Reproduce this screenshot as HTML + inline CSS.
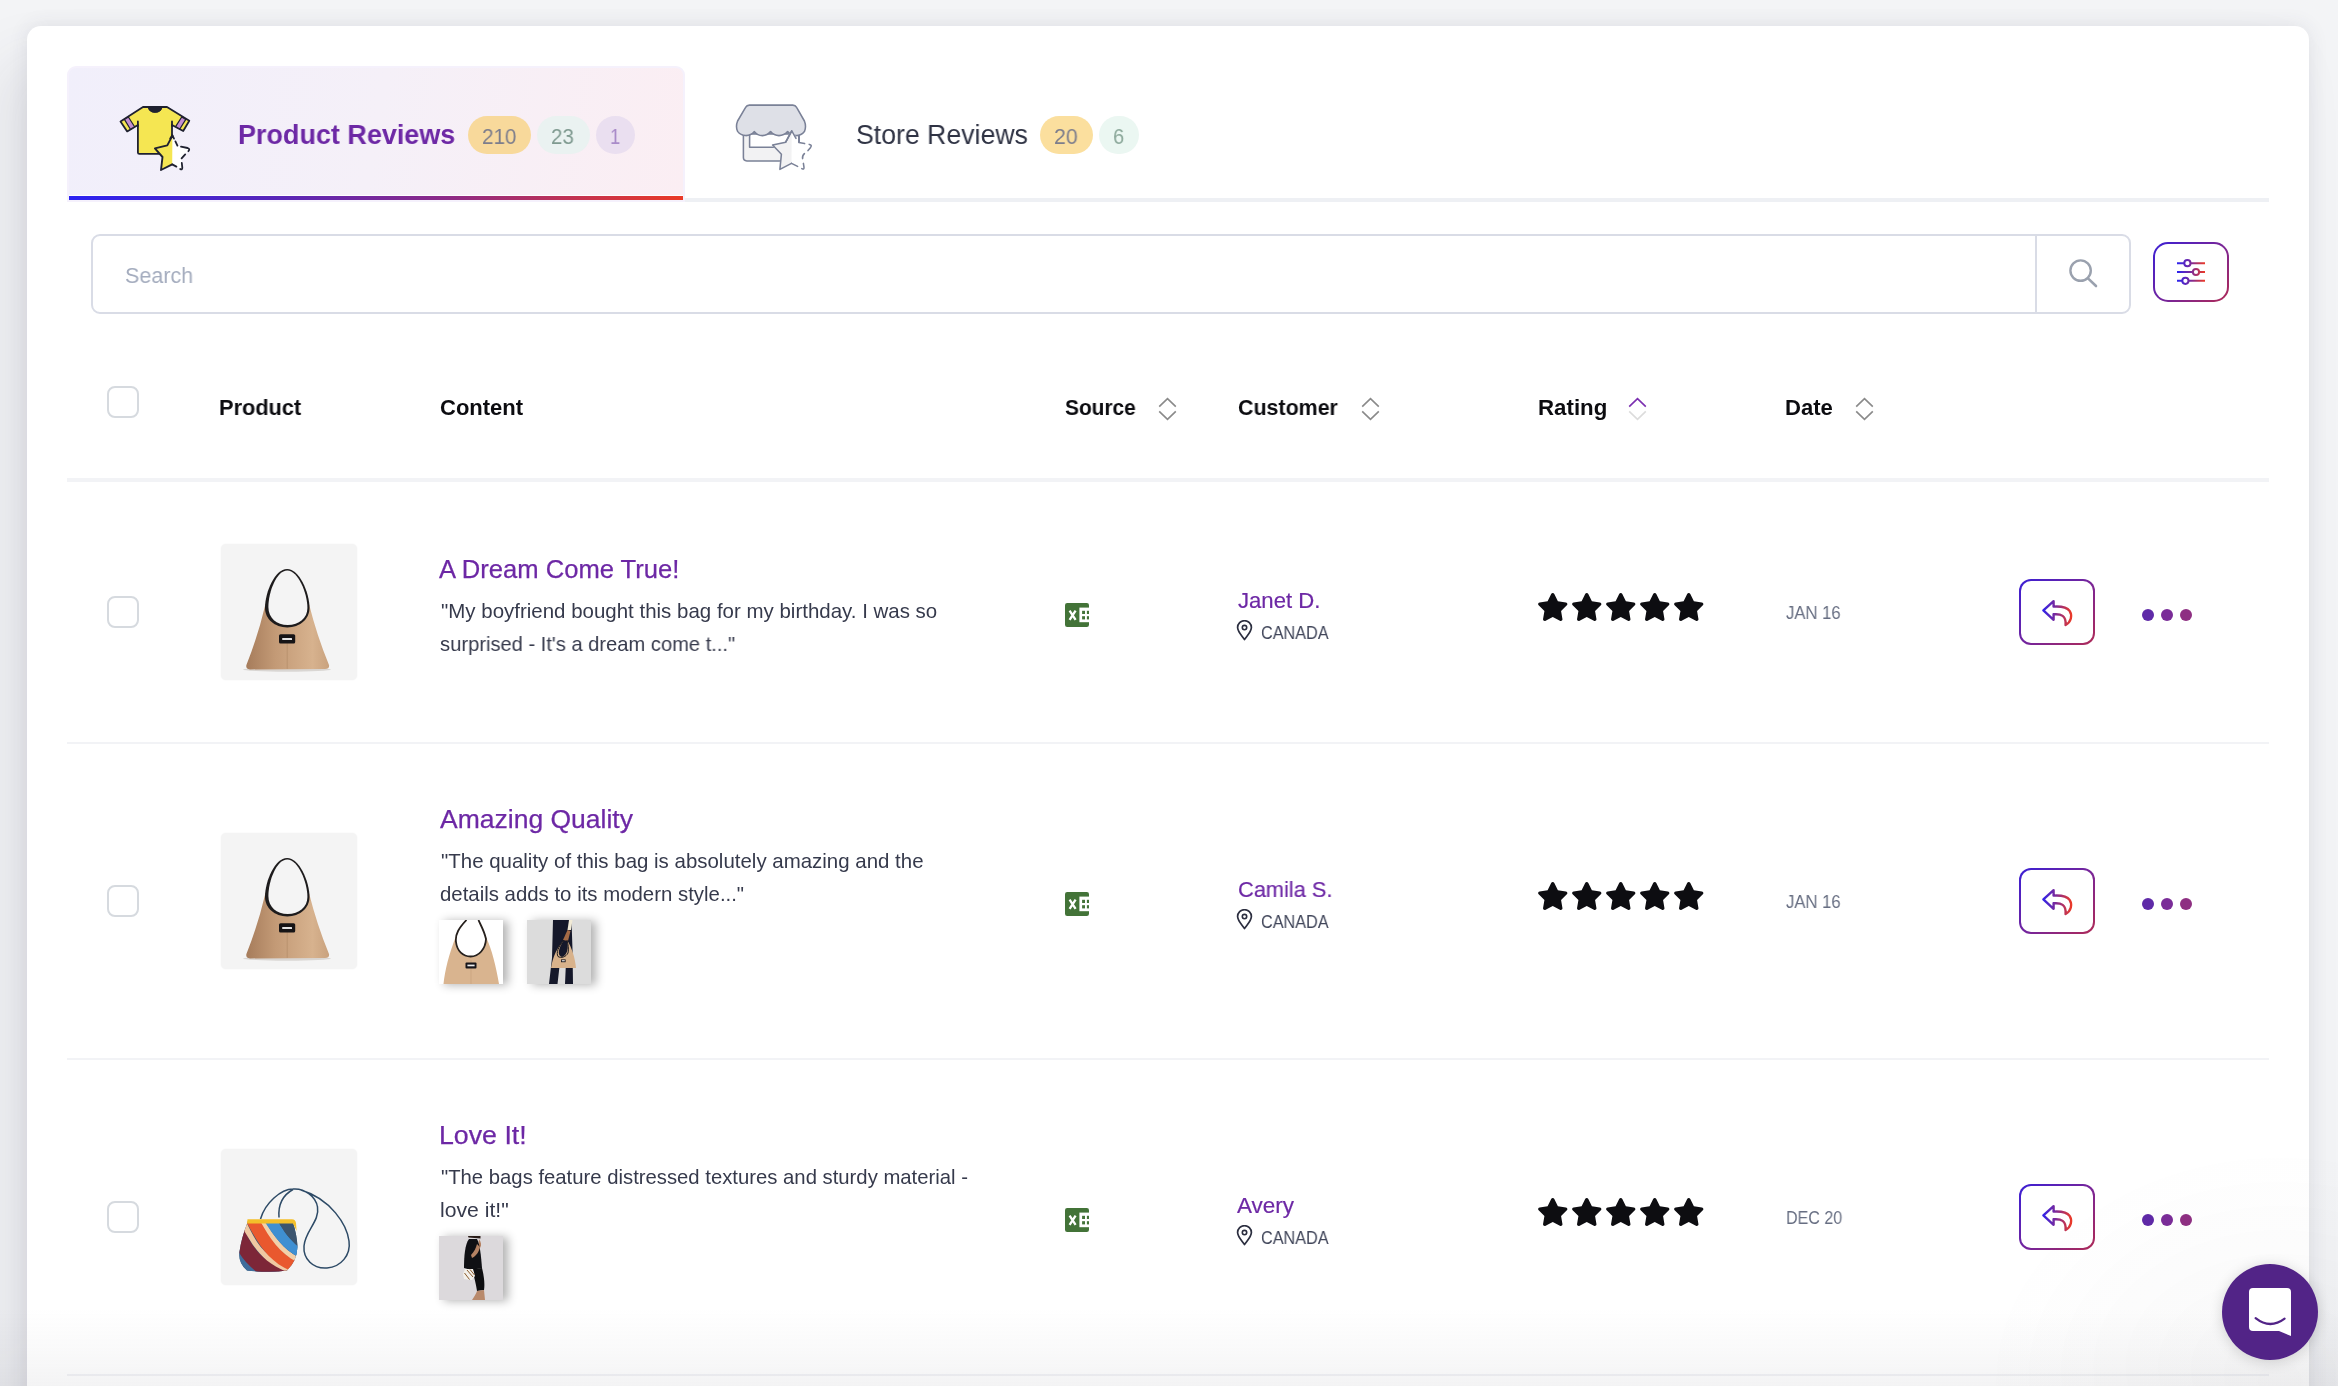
<!DOCTYPE html><html><head><meta charset="utf-8"><title>Reviews</title><style>
*{box-sizing:border-box;margin:0;padding:0}
html,body{width:2338px;height:1386px;overflow:hidden}
body{background:#f3f4f6;font-family:"Liberation Sans",sans-serif;position:relative}
.abs{position:absolute;display:block}
.card{position:absolute;left:27px;top:26px;width:2282px;height:1500px;background:#fff;border-radius:14px;box-shadow:0 0 20px rgba(60,60,90,.10),-25px 35px 60px rgba(60,60,90,.10)}
.t{position:absolute;white-space:nowrap;line-height:1;transform-origin:0 50%;will-change:transform}
.grayline{position:absolute;left:67px;top:198px;width:2202px;height:4px;background:#eef0f4}
.tab{position:absolute;left:67px;top:66px;width:618px;height:136px;border-radius:9px 9px 0 0;background:#f5f1fc;overflow:hidden}
.tabin{position:absolute;left:2px;top:2px;right:2px;height:127px;border-radius:7px 7px 0 0;background:linear-gradient(100deg,#f1effb 0%,#f5f0f8 50%,#fbeef3 100%)}
.uline{position:absolute;left:2px;right:2px;top:130px;height:4px;background:linear-gradient(90deg,#2b22f2 0%,#5a26b6 35%,#8e2a86 62%,#c9334a 85%,#ea3a26 100%)}
.tab:after{content:"";position:absolute;left:2px;right:2px;top:129px;height:1px;background:#fff}
.badge{position:absolute;height:38px;border-radius:19px}
.search{position:absolute;left:91px;top:234px;width:2040px;height:80px;border:2px solid #d9dce6;border-radius:9px;background:#fff}
.sdiv{position:absolute;left:1942px;top:0;width:2px;height:76px;background:#d9dce6}
.fbtn{position:absolute;left:2153px;top:242px;width:76px;height:60px;border-radius:15px;border:2px solid transparent;background:linear-gradient(#fff,#fff) padding-box,linear-gradient(135deg,#3a1fd6 0%,#7a2596 55%,#b02a55 100%) border-box}
.rbtn{position:absolute;left:2019px;width:76px;height:66px;border-radius:12px;border:2px solid transparent;background:linear-gradient(#fff,#fff) padding-box,linear-gradient(135deg,#3a1fd6 0%,#7a2596 55%,#b02a55 100%) border-box}
.rbtn svg,.fbtn svg{display:block}
.cb{position:absolute;left:107px;width:32px;height:32px;border:2px solid #d6dadf;border-radius:8px;background:#fff}
.hr{position:absolute;left:67px;width:2202px;height:2px;background:#f2f3f6}
.pimg{position:absolute;left:221px;width:136px;height:136px;border-radius:5px;background:#f4f4f4;overflow:hidden;box-shadow:0 0 2px rgba(0,0,0,.06)}
.pimg svg,.thumb svg{display:block}
.thumb{position:absolute;width:64px;height:64px;box-shadow:5px 1px 9px rgba(0,0,0,.3)}
.fade{position:absolute;left:0;top:1086px;width:2338px;height:300px;background:radial-gradient(ellipse 300px 240px at 2280px 100%,rgba(60,60,70,.04),rgba(60,60,70,0) 100%),linear-gradient(rgba(120,120,130,0) 74%,rgba(120,120,130,.04) 88%,rgba(120,120,130,.085))}
.chat{position:absolute;left:2222px;top:1264px;width:96px;height:96px;border-radius:50%;background:#522487;box-shadow:0 2px 14px rgba(0,0,0,.16)}
</style></head><body>
<div class="card"></div>
<div class="grayline"></div>
<div class="tab"><div class="tabin"></div><div class="uline"></div></div>
<svg class="abs" style="left:115px;top:100px" width="84" height="76" viewBox="115 100 84 76">
<g stroke="#1f2130" stroke-width="1.8" stroke-linejoin="round" stroke-linecap="round">
<path d="M143 107 L167 107 L189.3 120.8 L183.2 131 L172 125 L172 152.4 Q172 153.9 170.5 153.9 L139.4 153.9 Q137.9 153.9 137.9 152.4 L137.9 125 L127.2 131.4 L120.5 121.4 Z" fill="#f5e652"/>
<path d="M124.4 119.4 L128.4 117 L134.6 126.8 L130.4 129.3 Z" fill="#c48fd1" stroke-width="1.2"/>
<path d="M181.7 117 L185.8 119.4 L179.8 129 L175.6 126.6 Z" fill="#c48fd1" stroke-width="1.2"/>
<path d="M148.2 107.4 A7 6 0 0 0 162 107.4 Z" fill="#1f2130" stroke-width="1"/>
</g>
<path d="M172.3 135.6 L177.4 145.9 L189.6 149 L181.4 158.2 L182.3 170 L172 164.4 L161 170 L162.5 157 L154.9 148.4 L167.3 145.4 Z" fill="#fff"/>
<path d="M172.4 135.6 L172.2 164.4 L161 170 L162.5 157 L154.9 148.4 L167.3 145.4 Z" fill="#f5e652"/>
<path d="M172.4 135.6 L167.3 145.4 L154.9 148.4 L162.5 157 L161 170 L172.2 164.4" fill="none" stroke="#1f2130" stroke-width="1.9" stroke-linejoin="round" stroke-linecap="round"/>
<path d="M137.9 121.4 V126 M172 121.4 V126" stroke="#1f2130" stroke-width="1.8" stroke-linecap="round"/>
<path d="M170.2 138.4 L172.3 135.2 L174 138.6 M175.4 141.4 L177.4 145.6 M181 146.6 L187.6 148 Q190.4 149 188.4 151.2 M185.2 154.4 L181.6 158.4 M181.8 163 L182.3 167.6 Q182.4 170.4 180.2 169 M176.4 166.6 L172.2 164.4" fill="none" stroke="#1f2130" stroke-width="1.8" stroke-linecap="round" stroke-linejoin="round"/>
</svg>
<span class="t" style="left:237.82px;top:120.92px;font-size:27.5px;font-weight:700;color:#6d28a5;transform:scaleX(0.9805)">Product Reviews</span>
<div class="badge" style="left:468px;top:116px;width:63px;background:#f8d99b"></div>
<span class="t" style="left:481.86px;top:125.96px;font-size:21.9px;color:#7c7d8c;transform:scaleX(0.9449)">210</span>
<div class="badge" style="left:537px;top:116px;width:53px;background:#eaf2f1"></div>
<span class="t" style="left:551.36px;top:125.96px;font-size:21.9px;color:#7f9a90;transform:scaleX(0.9364)">23</span>
<div class="badge" style="left:596px;top:116px;width:38.6px;background:#eadff0"></div>
<span class="t" style="left:609.85px;top:125.96px;font-size:21.9px;color:#a98bc9;transform:scaleX(0.8455)">1</span>
<svg class="abs" style="left:730px;top:98px" width="90" height="80" viewBox="730 98 90 80">
<g stroke="#7a8197" stroke-width="1.55" stroke-linejoin="round" stroke-linecap="round">
<path d="M743.4 133 L743.4 157.6 Q743.4 160.9 746.8 160.9 L799 160.9 L799 133 Z" fill="#f2f2f3"/>
<path d="M749.6 134 L749.6 147.3 L799 147.3 L799 134 Z" fill="#fff"/>
<path d="M749.4 105.1 L792.8 105.1 Q795.4 105.1 796.6 107.4 L804.4 121 Q806.6 126.6 804.4 131.6 Q801 135.8 796.2 135.6 Q791 135.4 787.6 131.6 Q784 135.6 779 135.6 Q774 135.6 770.6 131.6 Q767.4 135.6 762.4 135.6 Q757.4 135.6 754.4 131.6 Q751 135.6 745.8 135.6 Q740.6 135.4 737.6 131.4 Q735.4 126.6 737.6 121 L745.6 107.4 Q746.8 105.1 749.4 105.1Z" fill="#dee0e7"/>
</g>
<path d="M791.8 130.9 L798.6 142.8 L811.4 145 L802.6 155.7 L804.1 169.4 L791.5 163.4 L779.9 169.4 L781.4 154.2 L772.6 145 L785.7 142.2 Z" fill="#fff" stroke="#fff" stroke-width="1.5" stroke-linejoin="round"/>
<path d="M791.7 130.9 L791.5 163.4 L779.9 169.4 L781.4 154.2 L772.6 145 L785.7 142.2 Z" fill="#f2f2f3"/>
<path d="M791.7 130.9 L785.7 142.2 L772.6 145 L781.4 154.2 L779.9 169.4 L791.5 163.4" fill="none" stroke="#7a8197" stroke-width="1.55" stroke-linejoin="round" stroke-linecap="round"/>
<path d="M785.7 142.2 L791.8 130.9 L796 138.4 M798.8 135.6 L798.8 142.6 L804.6 143.6 M809.2 144.4 Q812.4 145 810.6 147.4 L808 150.6 M804.4 153.6 Q802 155.8 802.6 158.6 M803.4 163.4 L804 167.4 Q804.2 170 801.8 168.6 M797.6 166.4 L791.5 163.4" fill="none" stroke="#7a8197" stroke-width="1.55" stroke-linecap="round" stroke-linejoin="round"/>
</svg>
<span class="t" style="left:855.83px;top:120.92px;font-size:27.5px;color:#2f3344;transform:scaleX(0.9696)">Store Reviews</span>
<div class="badge" style="left:1040px;top:116px;width:53px;background:#fbdf9e"></div>
<span class="t" style="left:1054.03px;top:125.96px;font-size:21.9px;color:#7c7d8c;transform:scaleX(0.9709)">20</span>
<div class="badge" style="left:1099px;top:116px;width:40px;background:#ebf7f2"></div>
<span class="t" style="left:1112.88px;top:125.96px;font-size:21.9px;color:#8ca99b;transform:scaleX(0.9182)">6</span>
<div class="search"><div class="sdiv"></div></div>
<span class="t" style="left:125.12px;top:265.08px;font-size:22px;color:#a4acbe;transform:scaleX(0.9767)">Search</span>
<svg class="abs" style="left:2066px;top:256px" width="36" height="36" viewBox="2066 256 36 36"><circle cx="2080.6" cy="270.6" r="10.2" fill="none" stroke="#9aa1ae" stroke-width="2.4"/><path d="M2088 278.4 L2096 286" stroke="#9aa1ae" stroke-width="2.6" stroke-linecap="round"/></svg>
<div class="fbtn"><svg width="72" height="56" viewBox="2155 244 72 56">
<defs><linearGradient id="fg" gradientUnits="userSpaceOnUse" x1="2177" y1="0" x2="2205" y2="0"><stop offset="0" stop-color="#2a22f0"/><stop offset=".5" stop-color="#7b2a9a"/><stop offset="1" stop-color="#ee3a24"/></linearGradient></defs>
<g stroke="url(#fg)" stroke-width="2" fill="#fff">
<path d="M2177 263.2 H2205 M2177 272 H2205 M2177 280.8 H2205"/>
<circle cx="2187.4" cy="263.2" r="3.1"/><circle cx="2196" cy="272" r="3.1"/><circle cx="2185.4" cy="280.8" r="3.1"/></g></svg></div>
<div class="cb" style="top:386px"></div>
<span class="t" style="left:219.41px;top:397.08px;font-size:22px;font-weight:700;color:#0c0c10;transform:scaleX(0.9893)">Product</span>
<span class="t" style="left:439.70px;top:397.08px;font-size:22px;font-weight:700;color:#0c0c10;transform:scaleX(0.9992)">Content</span>
<span class="t" style="left:1065.40px;top:397.08px;font-size:22px;font-weight:700;color:#0c0c10;transform:scaleX(0.9496)">Source</span>
<span class="t" style="left:1238.20px;top:397.08px;font-size:22px;font-weight:700;color:#0c0c10;transform:scaleX(0.9726)">Customer</span>
<span class="t" style="left:1537.59px;top:397.08px;font-size:22px;font-weight:700;color:#0c0c10;transform:scaleX(1.0121)">Rating</span>
<span class="t" style="left:1785.40px;top:397.08px;font-size:22px;font-weight:700;color:#0c0c10;transform:scaleX(1.0032)">Date</span>
<svg class="abs" style="left:1158px;top:396px" width="19" height="26" viewBox="0 0 19 26"><path d="M1.2 10.6 L9.5 2.6 L17.8 10.6" fill="none" stroke="#8a8a8a" stroke-width="1.6"/><path d="M1.2 15.4 L9.5 23.4 L17.8 15.4" fill="none" stroke="#8a8a8a" stroke-width="1.6"/></svg>
<svg class="abs" style="left:1361px;top:396px" width="19" height="26" viewBox="0 0 19 26"><path d="M1.2 10.6 L9.5 2.6 L17.8 10.6" fill="none" stroke="#8a8a8a" stroke-width="1.6"/><path d="M1.2 15.4 L9.5 23.4 L17.8 15.4" fill="none" stroke="#8a8a8a" stroke-width="1.6"/></svg>
<svg class="abs" style="left:1628px;top:396px" width="19" height="26" viewBox="0 0 19 26"><path d="M1.2 10.6 L9.5 2.6 L17.8 10.6" fill="none" stroke="#7b2fb0" stroke-width="1.6"/><path d="M1.2 15.4 L9.5 23.4 L17.8 15.4" fill="none" stroke="#dcdcdc" stroke-width="1.6"/></svg>
<svg class="abs" style="left:1855px;top:396px" width="19" height="26" viewBox="0 0 19 26"><path d="M1.2 10.6 L9.5 2.6 L17.8 10.6" fill="none" stroke="#8a8a8a" stroke-width="1.6"/><path d="M1.2 15.4 L9.5 23.4 L17.8 15.4" fill="none" stroke="#8a8a8a" stroke-width="1.6"/></svg>
<div class="hr" style="top:478px;height:4px"></div>
<div class="hr" style="top:742px"></div>
<div class="hr" style="top:1058px"></div>
<div class="hr" style="top:1374px"></div>
<div class="cb" style="top:596px"></div>
<div class="pimg" style="top:544px"><svg width="136" height="136" viewBox="0 0 136 136">
<defs><linearGradient id="bg1" x1="0" y1="0" x2="1" y2="0"><stop offset="0" stop-color="#a67c5b"/><stop offset=".35" stop-color="#c39a76"/><stop offset=".8" stop-color="#d7b28e"/><stop offset="1" stop-color="#c9a27e"/></linearGradient>
<clipPath id="bc1"><path d="M0 0H136V136H0Z M66.3 26.7 A19.6 27.4 0 0 0 66.3 81.5 A19.6 27.4 0 0 0 66.3 26.7Z" clip-rule="evenodd"/></clipPath></defs>
<ellipse cx="66" cy="125.5" rx="44" ry="2.2" fill="#d9d6d3"/>
<path d="M44.5 60 L88 60 Q96 92 108 121 Q108.8 125 104 125 L29 125.4 Q24.5 125 25.4 121 Q37 92 44.5 60Z" fill="url(#bg1)"/>
<path d="M66.1 25 C78 25 88.5 48 88.5 64 C88.5 75 79 83.4 66.3 83.4 C53.6 83.4 44 75 44 64 C44 48 54 25 66.1 25Z" fill="#1d1b1c"/>
<path d="M66.3 26.5 C77 26.5 86.4 49 86.4 64 C86.4 74 78 81 66.7 81 C55.6 81 47.4 74 47.4 63 C47.4 48 55.5 26.5 66.3 26.5Z" fill="#f4f4f4"/>
<path d="M66.2 92 L66.2 124.8" stroke="#b38c69" stroke-width="0.7"/>
<rect x="58" y="90.2" width="16.2" height="9.4" rx="1.6" fill="#161416"/>
<rect x="61.2" y="93.9" width="9.8" height="2" rx=".5" fill="#e4e4e4"/>
</svg></div>
<span class="t" style="left:439.00px;top:556.90px;font-size:25.4px;color:#6d28a5;transform:scaleX(1.0081);-webkit-text-stroke:.25px #6d28a5">A Dream Come True!</span>
<span class="t" style="left:440.60px;top:600.96px;font-size:20.25px;color:#363a4c;transform:scaleX(1.0111)">"My boyfriend bought this bag for my birthday. I was so</span>
<span class="t" style="left:439.70px;top:634.06px;font-size:20.25px;color:#363a4c;transform:scaleX(0.9942)">surprised - It's a dream come t..."</span>
<svg class="abs" style="left:1065px;top:603px" width="24" height="24" viewBox="0 0 24 24"><rect x="0" y="0" width="24" height="24" rx="2.2" fill="#437338"/><rect x="14.4" y="4.6" width="10" height="14.6" fill="#fff"/><rect x="17.1" y="7.8" width="2.9" height="3.2" fill="#437338"/><rect x="21.9" y="7.8" width="2.1" height="3.2" fill="#437338"/><rect x="17.1" y="13.2" width="2.9" height="3.2" fill="#437338"/><rect x="21.9" y="13.2" width="2.1" height="3.2" fill="#437338"/><path d="M4.6 7.6 L10.6 16.8 M10.6 7.6 L4.6 16.8" stroke="#fff" stroke-width="2.3" fill="none"/></svg>
<span class="t" style="left:1238.30px;top:589.98px;font-size:22px;color:#6d28a5;transform:scaleX(1.0047);-webkit-text-stroke:.2px #6d28a5">Janet D.</span>
<svg class="abs" style="left:1236px;top:620px" width="17" height="21" viewBox="0 0 17 21"><path d="M8.5 19.6 C5.2 15 1.6 11.6 1.6 7.6 A6.9 6.9 0 0 1 15.4 7.6 C15.4 11.6 11.8 15 8.5 19.6 Z" fill="none" stroke="#2b2e3f" stroke-width="1.7" stroke-linejoin="round"/><circle cx="8.5" cy="7.6" r="2.2" fill="none" stroke="#2b2e3f" stroke-width="1.6"/></svg>
<span class="t" style="left:1261.40px;top:624.95px;font-size:17.9px;color:#41465a;transform:scaleX(0.9059)">CANADA</span>
<svg class="abs" style="left:1536.75px;top:593px" width="31.5" height="28" viewBox="0 0 576 512"><path fill="#0d0d11" d="M259.3 17.8L194 150.2 47.9 171.5c-26.2 3.8-36.7 36.1-17.7 54.6l105.7 103-25 145.5c-4.5 26.3 23.2 46 46.4 33.7L288 439.6l130.7 68.7c23.2 12.2 50.9-7.4 46.4-33.7l-25-145.5 105.7-103c19-18.5 8.5-50.8-17.7-54.6L382 150.2 316.7 17.8c-11.7-23.6-45.6-23.9-57.4 0z"/></svg>
<svg class="abs" style="left:1570.75px;top:593px" width="31.5" height="28" viewBox="0 0 576 512"><path fill="#0d0d11" d="M259.3 17.8L194 150.2 47.9 171.5c-26.2 3.8-36.7 36.1-17.7 54.6l105.7 103-25 145.5c-4.5 26.3 23.2 46 46.4 33.7L288 439.6l130.7 68.7c23.2 12.2 50.9-7.4 46.4-33.7l-25-145.5 105.7-103c19-18.5 8.5-50.8-17.7-54.6L382 150.2 316.7 17.8c-11.7-23.6-45.6-23.9-57.4 0z"/></svg>
<svg class="abs" style="left:1604.75px;top:593px" width="31.5" height="28" viewBox="0 0 576 512"><path fill="#0d0d11" d="M259.3 17.8L194 150.2 47.9 171.5c-26.2 3.8-36.7 36.1-17.7 54.6l105.7 103-25 145.5c-4.5 26.3 23.2 46 46.4 33.7L288 439.6l130.7 68.7c23.2 12.2 50.9-7.4 46.4-33.7l-25-145.5 105.7-103c19-18.5 8.5-50.8-17.7-54.6L382 150.2 316.7 17.8c-11.7-23.6-45.6-23.9-57.4 0z"/></svg>
<svg class="abs" style="left:1638.75px;top:593px" width="31.5" height="28" viewBox="0 0 576 512"><path fill="#0d0d11" d="M259.3 17.8L194 150.2 47.9 171.5c-26.2 3.8-36.7 36.1-17.7 54.6l105.7 103-25 145.5c-4.5 26.3 23.2 46 46.4 33.7L288 439.6l130.7 68.7c23.2 12.2 50.9-7.4 46.4-33.7l-25-145.5 105.7-103c19-18.5 8.5-50.8-17.7-54.6L382 150.2 316.7 17.8c-11.7-23.6-45.6-23.9-57.4 0z"/></svg>
<svg class="abs" style="left:1672.75px;top:593px" width="31.5" height="28" viewBox="0 0 576 512"><path fill="#0d0d11" d="M259.3 17.8L194 150.2 47.9 171.5c-26.2 3.8-36.7 36.1-17.7 54.6l105.7 103-25 145.5c-4.5 26.3 23.2 46 46.4 33.7L288 439.6l130.7 68.7c23.2 12.2 50.9-7.4 46.4-33.7l-25-145.5 105.7-103c19-18.5 8.5-50.8-17.7-54.6L382 150.2 316.7 17.8c-11.7-23.6-45.6-23.9-57.4 0z"/></svg>
<span class="t" style="left:1786.20px;top:603.96px;font-size:18px;color:#676e82;transform:scaleX(0.9252)">JAN 16</span>
<div class="rbtn" style="top:579px"><svg width="72" height="62" viewBox="2021 581 72 62"><defs><linearGradient id="rg" gradientUnits="userSpaceOnUse" x1="2042" y1="0" x2="2072" y2="0"><stop offset="0" stop-color="#2a22f0"/><stop offset=".45" stop-color="#7b2a9a"/><stop offset="1" stop-color="#ee3a24"/></linearGradient></defs><path d="M2053.6 601.2 L2043.4 610.4 L2053.6 619.8 L2053.6 614.3 C2061 613.6 2066.3 615.6 2065.6 625 C2071.2 621.8 2072.6 615.4 2069.6 610.9 C2066.6 606.6 2060.5 606.2 2053.6 606.6 Z" fill="none" stroke="url(#rg)" stroke-width="2.4" stroke-linejoin="round"/></svg></div>
<div class="abs" style="left:2142.2px;top:609px;width:12px;height:12px;border-radius:50%;background:#5f2aa8"></div><div class="abs" style="left:2161.1px;top:609px;width:12px;height:12px;border-radius:50%;background:#7a2c98"></div><div class="abs" style="left:2180.0px;top:609px;width:12px;height:12px;border-radius:50%;background:#8e2f82"></div>
<div class="cb" style="top:885px"></div>
<div class="pimg" style="top:833px"><svg width="136" height="136" viewBox="0 0 136 136">
<defs><linearGradient id="bg2" x1="0" y1="0" x2="1" y2="0"><stop offset="0" stop-color="#a67c5b"/><stop offset=".35" stop-color="#c39a76"/><stop offset=".8" stop-color="#d7b28e"/><stop offset="1" stop-color="#c9a27e"/></linearGradient>
<clipPath id="bc2"><path d="M0 0H136V136H0Z M66.3 26.7 A19.6 27.4 0 0 0 66.3 81.5 A19.6 27.4 0 0 0 66.3 26.7Z" clip-rule="evenodd"/></clipPath></defs>
<ellipse cx="66" cy="125.5" rx="44" ry="2.2" fill="#d9d6d3"/>
<path d="M44.5 60 L88 60 Q96 92 108 121 Q108.8 125 104 125 L29 125.4 Q24.5 125 25.4 121 Q37 92 44.5 60Z" fill="url(#bg2)"/>
<path d="M66.1 25 C78 25 88.5 48 88.5 64 C88.5 75 79 83.4 66.3 83.4 C53.6 83.4 44 75 44 64 C44 48 54 25 66.1 25Z" fill="#1d1b1c"/>
<path d="M66.3 26.5 C77 26.5 86.4 49 86.4 64 C86.4 74 78 81 66.7 81 C55.6 81 47.4 74 47.4 63 C47.4 48 55.5 26.5 66.3 26.5Z" fill="#f4f4f4"/>
<path d="M66.2 92 L66.2 124.8" stroke="#b38c69" stroke-width="0.7"/>
<rect x="58" y="90.2" width="16.2" height="9.4" rx="1.6" fill="#161416"/>
<rect x="61.2" y="93.9" width="9.8" height="2" rx=".5" fill="#e4e4e4"/>
</svg></div>
<span class="t" style="left:439.60px;top:806.90px;font-size:25.4px;color:#6d28a5;transform:scaleX(1.0439);-webkit-text-stroke:.25px #6d28a5">Amazing Quality</span>
<span class="t" style="left:440.60px;top:850.96px;font-size:20.25px;color:#363a4c;transform:scaleX(1.0101)">"The quality of this bag is absolutely amazing and the</span>
<span class="t" style="left:439.90px;top:884.06px;font-size:20.25px;color:#363a4c;transform:scaleX(1.0067)">details adds to its modern style..."</span>
<div class="thumb" style="left:439px;top:920.0px"><svg width="64" height="64" viewBox="0 0 64 64"><rect width="64" height="64" fill="#fff"/>
<path d="M17 16 C10 34 6 50 4.5 64 L60 64 C57 46 53 30 47 17 C46 30 40 37 31 37 C22 36 16 28 17 16Z" fill="#d9b48f"/>
<path d="M27.5 0 C20 8 16 14 17 22 C18 31 24 36.5 31.5 36.5 C40 36.5 46.5 29 47 19 C45 10 41 4 39.5 0" fill="none" stroke="#26201d" stroke-width="1.8"/>
<path d="M32 40 L32 64" stroke="#c7a17c" stroke-width=".7"/>
<rect x="26.5" y="42.5" width="11" height="6" rx="1" fill="#17151a"/><rect x="28.4" y="44.6" width="7.2" height="1.7" fill="#eee"/></svg></div>
<div class="thumb" style="left:527px;top:920.0px"><svg width="64" height="64" viewBox="0 0 64 64"><rect width="64" height="64" fill="#dcdcdc"/>
<path d="M26 0 L44.5 0 L45.5 30 L46 64 L38 64 L39 42 L33 42 L30.5 64 L22 64 L25 38 Z" fill="#15182a"/>
<path d="M42 0 L45.5 0 L44 10 L40.5 10Z" fill="#f1ead6"/>
<path d="M40.5 10 L43.5 11 L41 21 L36 20Z" fill="#a56a45"/>
<path d="M37 20 C30 28 26 36 24 48 L49 48 C48 38 45 28 40 20 C42 28 40 36 35 37 C30 36 31 28 37 20Z" fill="#d8b28b"/>
<path d="M37 20 C31 27 29 33 31 36.5 C34 38.5 39 37 41 33 C42 29 41 24 40 20" fill="none" stroke="#1c1a1c" stroke-width="1"/>
<rect x="34" y="39.4" width="4.6" height="2.8" fill="#17151a"/><rect x="34.8" y="40.2" width="3" height="1.1" fill="#eee"/></svg></div>
<svg class="abs" style="left:1065px;top:892px" width="24" height="24" viewBox="0 0 24 24"><rect x="0" y="0" width="24" height="24" rx="2.2" fill="#437338"/><rect x="14.4" y="4.6" width="10" height="14.6" fill="#fff"/><rect x="17.1" y="7.8" width="2.9" height="3.2" fill="#437338"/><rect x="21.9" y="7.8" width="2.1" height="3.2" fill="#437338"/><rect x="17.1" y="13.2" width="2.9" height="3.2" fill="#437338"/><rect x="21.9" y="13.2" width="2.1" height="3.2" fill="#437338"/><path d="M4.6 7.6 L10.6 16.8 M10.6 7.6 L4.6 16.8" stroke="#fff" stroke-width="2.3" fill="none"/></svg>
<span class="t" style="left:1237.61px;top:878.98px;font-size:22px;color:#6d28a5;transform:scaleX(0.9909);-webkit-text-stroke:.2px #6d28a5">Camila S.</span>
<svg class="abs" style="left:1236px;top:909px" width="17" height="21" viewBox="0 0 17 21"><path d="M8.5 19.6 C5.2 15 1.6 11.6 1.6 7.6 A6.9 6.9 0 0 1 15.4 7.6 C15.4 11.6 11.8 15 8.5 19.6 Z" fill="none" stroke="#2b2e3f" stroke-width="1.7" stroke-linejoin="round"/><circle cx="8.5" cy="7.6" r="2.2" fill="none" stroke="#2b2e3f" stroke-width="1.6"/></svg>
<span class="t" style="left:1261.40px;top:913.95px;font-size:17.9px;color:#41465a;transform:scaleX(0.9059)">CANADA</span>
<svg class="abs" style="left:1536.75px;top:882px" width="31.5" height="28" viewBox="0 0 576 512"><path fill="#0d0d11" d="M259.3 17.8L194 150.2 47.9 171.5c-26.2 3.8-36.7 36.1-17.7 54.6l105.7 103-25 145.5c-4.5 26.3 23.2 46 46.4 33.7L288 439.6l130.7 68.7c23.2 12.2 50.9-7.4 46.4-33.7l-25-145.5 105.7-103c19-18.5 8.5-50.8-17.7-54.6L382 150.2 316.7 17.8c-11.7-23.6-45.6-23.9-57.4 0z"/></svg>
<svg class="abs" style="left:1570.75px;top:882px" width="31.5" height="28" viewBox="0 0 576 512"><path fill="#0d0d11" d="M259.3 17.8L194 150.2 47.9 171.5c-26.2 3.8-36.7 36.1-17.7 54.6l105.7 103-25 145.5c-4.5 26.3 23.2 46 46.4 33.7L288 439.6l130.7 68.7c23.2 12.2 50.9-7.4 46.4-33.7l-25-145.5 105.7-103c19-18.5 8.5-50.8-17.7-54.6L382 150.2 316.7 17.8c-11.7-23.6-45.6-23.9-57.4 0z"/></svg>
<svg class="abs" style="left:1604.75px;top:882px" width="31.5" height="28" viewBox="0 0 576 512"><path fill="#0d0d11" d="M259.3 17.8L194 150.2 47.9 171.5c-26.2 3.8-36.7 36.1-17.7 54.6l105.7 103-25 145.5c-4.5 26.3 23.2 46 46.4 33.7L288 439.6l130.7 68.7c23.2 12.2 50.9-7.4 46.4-33.7l-25-145.5 105.7-103c19-18.5 8.5-50.8-17.7-54.6L382 150.2 316.7 17.8c-11.7-23.6-45.6-23.9-57.4 0z"/></svg>
<svg class="abs" style="left:1638.75px;top:882px" width="31.5" height="28" viewBox="0 0 576 512"><path fill="#0d0d11" d="M259.3 17.8L194 150.2 47.9 171.5c-26.2 3.8-36.7 36.1-17.7 54.6l105.7 103-25 145.5c-4.5 26.3 23.2 46 46.4 33.7L288 439.6l130.7 68.7c23.2 12.2 50.9-7.4 46.4-33.7l-25-145.5 105.7-103c19-18.5 8.5-50.8-17.7-54.6L382 150.2 316.7 17.8c-11.7-23.6-45.6-23.9-57.4 0z"/></svg>
<svg class="abs" style="left:1672.75px;top:882px" width="31.5" height="28" viewBox="0 0 576 512"><path fill="#0d0d11" d="M259.3 17.8L194 150.2 47.9 171.5c-26.2 3.8-36.7 36.1-17.7 54.6l105.7 103-25 145.5c-4.5 26.3 23.2 46 46.4 33.7L288 439.6l130.7 68.7c23.2 12.2 50.9-7.4 46.4-33.7l-25-145.5 105.7-103c19-18.5 8.5-50.8-17.7-54.6L382 150.2 316.7 17.8c-11.7-23.6-45.6-23.9-57.4 0z"/></svg>
<span class="t" style="left:1786.20px;top:892.96px;font-size:18px;color:#676e82;transform:scaleX(0.9252)">JAN 16</span>
<div class="rbtn" style="top:868px"><svg width="72" height="62" viewBox="2021 581 72 62"><defs><linearGradient id="rg" gradientUnits="userSpaceOnUse" x1="2042" y1="0" x2="2072" y2="0"><stop offset="0" stop-color="#2a22f0"/><stop offset=".45" stop-color="#7b2a9a"/><stop offset="1" stop-color="#ee3a24"/></linearGradient></defs><path d="M2053.6 601.2 L2043.4 610.4 L2053.6 619.8 L2053.6 614.3 C2061 613.6 2066.3 615.6 2065.6 625 C2071.2 621.8 2072.6 615.4 2069.6 610.9 C2066.6 606.6 2060.5 606.2 2053.6 606.6 Z" fill="none" stroke="url(#rg)" stroke-width="2.4" stroke-linejoin="round"/></svg></div>
<div class="abs" style="left:2142.2px;top:898px;width:12px;height:12px;border-radius:50%;background:#5f2aa8"></div><div class="abs" style="left:2161.1px;top:898px;width:12px;height:12px;border-radius:50%;background:#7a2c98"></div><div class="abs" style="left:2180.0px;top:898px;width:12px;height:12px;border-radius:50%;background:#8e2f82"></div>
<div class="cb" style="top:1201px"></div>
<div class="pimg" style="top:1149px"><svg width="136" height="136" viewBox="0 0 136 136">
<defs><clipPath id="bc3"><path d="M27 72 L71.5 72 Q76 86 76.5 98 Q76 112 66 121.5 Q50 124 26 121.5 Q17 114 18.5 103 Q20 90 27 72Z"/></clipPath></defs>
<path d="M39.5 70 C44 54 60 40 72 40 C84 39 95 48 96.5 58 C99 72 84 82 83 97 C82 110 92 120 106 119 C120 118 130 106 128 92 C126 76 110 50 80 41" fill="none" stroke="#2d4a66" stroke-width="1.5"/>
<path d="M58 68.5 C57 56 62 46 72 40.5" fill="none" stroke="#2d4a66" stroke-width="1.5"/>
<g clip-path="url(#bc3)">
<rect x="10" y="60" width="80" height="70" fill="#3a5672"/>
<path d="M10 95 C25 100 35 118 60 124 L10 130Z" fill="#3f6d9c"/>
<path d="M22 78 C30 95 38 112 68 122 L40 126 C28 118 20 108 16 100Z" fill="#7d2638"/>
<path d="M25 72 C34 92 44 110 72 120 L66 123 C40 113 32 96 22 80Z" fill="#f0c8a2"/>
<path d="M27 70 L40 70 C50 88 58 104 76 112 L70 122 C46 112 36 92 26 74Z" fill="#e9582e"/>
<path d="M38 70 L43 70 C52 86 62 100 77 108 L76 113 C58 104 48 88 38 70Z" fill="#f2cfa8"/>
<path d="M42 70 L56 70 C62 82 70 92 78 98 L77 108 C62 100 52 86 42 70Z" fill="#3f8fd2"/>
<path d="M56 70 L74 70 L78 98 C70 92 62 82 56 70Z" fill="#3b546e"/>
</g>
<path d="M26.5 70.2 L71 70.2 Q74.5 70.4 75 74 L75.6 82 L72 74.6 L26 74.6 Z" fill="#f3bf2a"/>
</svg></div>
<span class="t" style="left:438.99px;top:1123.00px;font-size:25.4px;color:#6d28a5;transform:scaleX(1.0527);-webkit-text-stroke:.25px #6d28a5">Love It!</span>
<span class="t" style="left:440.60px;top:1167.06px;font-size:20.25px;color:#363a4c;transform:scaleX(1.0017)">"The bags feature distressed textures and sturdy material -</span>
<span class="t" style="left:439.55px;top:1199.96px;font-size:20.25px;color:#363a4c;transform:scaleX(1.0461)">love it!"</span>
<div class="thumb" style="left:439px;top:1235.9px"><svg width="64" height="64" viewBox="0 0 64 64"><rect width="64" height="64" fill="#dcd9dc"/>
<path d="M29 0 L41.5 0 L41.5 2.4 L29.5 1.6Z" fill="#2a1d18"/>
<path d="M40 3 C42 6 43 9 41 12 L39 11 Z" fill="#b58263"/>
<path d="M30 3 L38 3 C41 8 42 20 43 32 L32 34 L25 32 C25 20 26 8 30 3Z" fill="#101014"/>
<path d="M38 8 L41 11 C40 16 37 20 33 22 L32 19 C35 16 37 12 38 8Z" fill="#b58263"/>
<path d="M33 33 L43 32 C45 40 46 48 45 54 L38 55 C37 48 35 40 33 33Z" fill="#0e0e10"/>
<path d="M38 55 L45 54 L46 64 L33 64 C35 61 37 58 38 55Z" fill="#b98a6c"/>
<path d="M26 33 L34 33 L36 40 L33 44 L25 43 L24 38Z" fill="#f3f0ea"/>
<path d="M28 34 L34 41 M31 33.5 L35.5 39 M25.5 37 L30.5 43.5" stroke="#8a5a2c" stroke-width="1"/></svg></div>
<svg class="abs" style="left:1065px;top:1208px" width="24" height="24" viewBox="0 0 24 24"><rect x="0" y="0" width="24" height="24" rx="2.2" fill="#437338"/><rect x="14.4" y="4.6" width="10" height="14.6" fill="#fff"/><rect x="17.1" y="7.8" width="2.9" height="3.2" fill="#437338"/><rect x="21.9" y="7.8" width="2.1" height="3.2" fill="#437338"/><rect x="17.1" y="13.2" width="2.9" height="3.2" fill="#437338"/><rect x="21.9" y="13.2" width="2.1" height="3.2" fill="#437338"/><path d="M4.6 7.6 L10.6 16.8 M10.6 7.6 L4.6 16.8" stroke="#fff" stroke-width="2.3" fill="none"/></svg>
<span class="t" style="left:1237.20px;top:1194.98px;font-size:22px;color:#6d28a5;transform:scaleX(1.0208);-webkit-text-stroke:.2px #6d28a5">Avery</span>
<svg class="abs" style="left:1236px;top:1225px" width="17" height="21" viewBox="0 0 17 21"><path d="M8.5 19.6 C5.2 15 1.6 11.6 1.6 7.6 A6.9 6.9 0 0 1 15.4 7.6 C15.4 11.6 11.8 15 8.5 19.6 Z" fill="none" stroke="#2b2e3f" stroke-width="1.7" stroke-linejoin="round"/><circle cx="8.5" cy="7.6" r="2.2" fill="none" stroke="#2b2e3f" stroke-width="1.6"/></svg>
<span class="t" style="left:1261.40px;top:1229.95px;font-size:17.9px;color:#41465a;transform:scaleX(0.9059)">CANADA</span>
<svg class="abs" style="left:1536.75px;top:1198px" width="31.5" height="28" viewBox="0 0 576 512"><path fill="#0d0d11" d="M259.3 17.8L194 150.2 47.9 171.5c-26.2 3.8-36.7 36.1-17.7 54.6l105.7 103-25 145.5c-4.5 26.3 23.2 46 46.4 33.7L288 439.6l130.7 68.7c23.2 12.2 50.9-7.4 46.4-33.7l-25-145.5 105.7-103c19-18.5 8.5-50.8-17.7-54.6L382 150.2 316.7 17.8c-11.7-23.6-45.6-23.9-57.4 0z"/></svg>
<svg class="abs" style="left:1570.75px;top:1198px" width="31.5" height="28" viewBox="0 0 576 512"><path fill="#0d0d11" d="M259.3 17.8L194 150.2 47.9 171.5c-26.2 3.8-36.7 36.1-17.7 54.6l105.7 103-25 145.5c-4.5 26.3 23.2 46 46.4 33.7L288 439.6l130.7 68.7c23.2 12.2 50.9-7.4 46.4-33.7l-25-145.5 105.7-103c19-18.5 8.5-50.8-17.7-54.6L382 150.2 316.7 17.8c-11.7-23.6-45.6-23.9-57.4 0z"/></svg>
<svg class="abs" style="left:1604.75px;top:1198px" width="31.5" height="28" viewBox="0 0 576 512"><path fill="#0d0d11" d="M259.3 17.8L194 150.2 47.9 171.5c-26.2 3.8-36.7 36.1-17.7 54.6l105.7 103-25 145.5c-4.5 26.3 23.2 46 46.4 33.7L288 439.6l130.7 68.7c23.2 12.2 50.9-7.4 46.4-33.7l-25-145.5 105.7-103c19-18.5 8.5-50.8-17.7-54.6L382 150.2 316.7 17.8c-11.7-23.6-45.6-23.9-57.4 0z"/></svg>
<svg class="abs" style="left:1638.75px;top:1198px" width="31.5" height="28" viewBox="0 0 576 512"><path fill="#0d0d11" d="M259.3 17.8L194 150.2 47.9 171.5c-26.2 3.8-36.7 36.1-17.7 54.6l105.7 103-25 145.5c-4.5 26.3 23.2 46 46.4 33.7L288 439.6l130.7 68.7c23.2 12.2 50.9-7.4 46.4-33.7l-25-145.5 105.7-103c19-18.5 8.5-50.8-17.7-54.6L382 150.2 316.7 17.8c-11.7-23.6-45.6-23.9-57.4 0z"/></svg>
<svg class="abs" style="left:1672.75px;top:1198px" width="31.5" height="28" viewBox="0 0 576 512"><path fill="#0d0d11" d="M259.3 17.8L194 150.2 47.9 171.5c-26.2 3.8-36.7 36.1-17.7 54.6l105.7 103-25 145.5c-4.5 26.3 23.2 46 46.4 33.7L288 439.6l130.7 68.7c23.2 12.2 50.9-7.4 46.4-33.7l-25-145.5 105.7-103c19-18.5 8.5-50.8-17.7-54.6L382 150.2 316.7 17.8c-11.7-23.6-45.6-23.9-57.4 0z"/></svg>
<span class="t" style="left:1786.11px;top:1208.96px;font-size:18px;color:#676e82;transform:scaleX(0.8917)">DEC 20</span>
<div class="rbtn" style="top:1184px"><svg width="72" height="62" viewBox="2021 581 72 62"><defs><linearGradient id="rg" gradientUnits="userSpaceOnUse" x1="2042" y1="0" x2="2072" y2="0"><stop offset="0" stop-color="#2a22f0"/><stop offset=".45" stop-color="#7b2a9a"/><stop offset="1" stop-color="#ee3a24"/></linearGradient></defs><path d="M2053.6 601.2 L2043.4 610.4 L2053.6 619.8 L2053.6 614.3 C2061 613.6 2066.3 615.6 2065.6 625 C2071.2 621.8 2072.6 615.4 2069.6 610.9 C2066.6 606.6 2060.5 606.2 2053.6 606.6 Z" fill="none" stroke="url(#rg)" stroke-width="2.4" stroke-linejoin="round"/></svg></div>
<div class="abs" style="left:2142.2px;top:1214px;width:12px;height:12px;border-radius:50%;background:#5f2aa8"></div><div class="abs" style="left:2161.1px;top:1214px;width:12px;height:12px;border-radius:50%;background:#7a2c98"></div><div class="abs" style="left:2180.0px;top:1214px;width:12px;height:12px;border-radius:50%;background:#8e2f82"></div>
<div class="fade"></div>
<div class="chat"><svg width="96" height="96" viewBox="2222 1264 96 96">
<path d="M2253 1288 H2287 Q2291 1288 2291 1292 V1336 L2279 1331 H2253 Q2249 1331 2249 1327 V1292 Q2249 1288 2253 1288Z" fill="#fff"/>
<path d="M2255.6 1318.2 Q2270 1329.6 2284.6 1318.6" fill="none" stroke="#522487" stroke-width="2.2" stroke-linecap="round"/></svg></div>
</body></html>
